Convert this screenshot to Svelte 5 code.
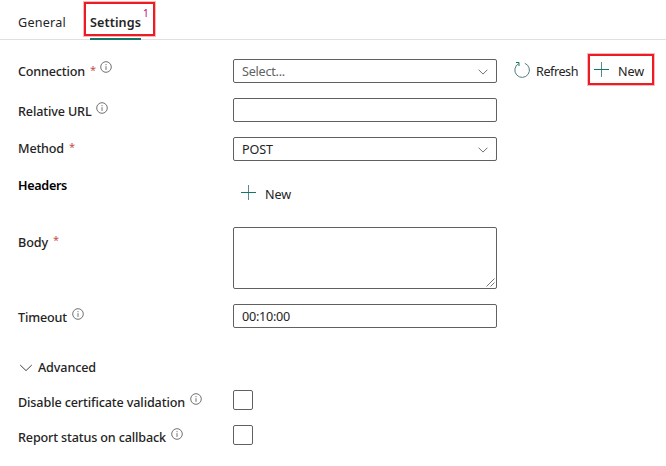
<script>
  const tabs = [
    { text: 'General', width: 48 },
    { text: 'Settings', width: 51, active: true, count: 1 }
  ];

  function fit(node, width) {
    const natural = node.getBoundingClientRect().width;
    node.style.letterSpacing = `${(width - natural) / node.textContent.length}px`;
  }
</script>

{#snippet info()}
  <svg class="info" width="12" height="12" viewBox="0 0 12 12">
    <circle cx="6" cy="6" r="5.3" />
    <path d="M6 5.2v3.7M6 3.1v1.1" />
  </svg>
{/snippet}

{#snippet label(text, width, required, hint)}
  <div class="label">
    <span use:fit={width}>{text}</span>
    {#if required}<b class="star">*</b>{/if}
    {#if hint}{@render info()}{/if}
  </div>
{/snippet}

{#snippet chevron()}
  <svg class="chevron" width="10" height="6" viewBox="0 0 10 6"><path d="M.6.7 5 5.1 9.4.7" /></svg>
{/snippet}

{#snippet plus()}
  <svg class="plus" width="15" height="15" viewBox="0 0 15 15">
    <path class="v" d="M7.5 0v15" /><path class="h" d="M0 7.5h15" />
  </svg>
{/snippet}

<main>
  <nav>
    {#each tabs as tab}
      <div class="tab" class:active={tab.active}>
        <span class="name" use:fit={tab.width}>{tab.text}</span>
        {#if tab.count}<span class="count">{tab.count}</span><i class="mark settings-mark"></i>{/if}
      </div>
    {/each}
  </nav>

  <section>
    <div class="row connection">
      {@render label('Connection', 67, true, true)}
      <div class="box muted"><span use:fit={43}>Select...</span>{@render chevron()}</div>
      <div class="action refresh">
        <svg width="16" height="16" viewBox="0 0 16 16">
          <path class="ring" d="M10.8 1.3A7.3 7.3 0 1 1 4.6 1.7" />
          <path class="arrow" d="M2 .5h3v3.5" />
        </svg>
        <span use:fit={42}>Refresh</span>
      </div>
      <div class="action new">
        {@render plus()}<span use:fit={26}>New</span>
        <i class="mark new-mark"></i>
      </div>
    </div>
    <div class="row relative">
      {@render label('Relative URL', 73.5, false, true)}
      <div class="box"></div>
    </div>
    <div class="row method">
      {@render label('Method', 46, true, false)}
      <div class="box"><span use:fit={31}>POST</span>{@render chevron()}</div>
    </div>
    <div class="row headers">
      {@render label('Headers', 49, false, false)}
      <div class="action add">{@render plus()}<span use:fit={26}>New</span></div>
    </div>
    <div class="row body">
      {@render label('Body', 30, true, false)}
      <div class="box area">
        <svg width="9" height="9" viewBox="0 0 9 9"><path d="M.5 8.5l8-8M4.5 8.5l4-4" /></svg>
      </div>
    </div>
    <div class="row timeout">
      {@render label('Timeout', 49, false, true)}
      <div class="box"><span use:fit={48}>00:10:00</span></div>
    </div>
    <div class="advanced">
      <svg width="14" height="8" viewBox="0 0 14 8"><path d="M1.2 1 7 6.6 12.8 1" /></svg>
      <span use:fit={58}>Advanced</span>
    </div>
    <div class="row check">
      {@render label('Disable certificate validation', 167, false, true)}
      <div class="checkbox"></div>
    </div>
    <div class="row check">
      {@render label('Report status on callback', 148, false, true)}
      <div class="checkbox"></div>
    </div>
  </section>
</main>

<style>
  :global(body) { background: #fff; }
  main {
    width: 666px;
    height: 466px;
    overflow: hidden;
    font: 12.6px/18px "Noto Sans", "Open Sans", sans-serif;
    color: #242424;
    white-space: nowrap;
  }
  svg { display: block; flex: none; fill: none; overflow: visible; }
  span { flex: none; }
  nav {
    box-sizing: border-box;
    height: 40px;
    display: flex;
    gap: 24px;
    padding-left: 18px;
    border-bottom: 1px solid #e0e0e0;
  }
  .tab { position: relative; height: 40px; padding-top: 14px; box-sizing: border-box; }
  .tab:first-child { width: 48px; }
  .tab.active { width: 51px; border-bottom: 2px solid #117865; }
  .name { display: inline-block; }
  .active .name { font-weight: 600; }
  .count { position: absolute; left: 53px; top: 4px; font-size: 10px; color: #bf0077; }
  .mark { position: absolute; box-sizing: border-box; border: 2px solid #ec1c24; box-shadow: 0 0 0 1px #f9b9bc; }
  .settings-mark { left: -6px; top: 2px; width: 71px; height: 34px; }
  section { padding: 19px 0 0 18px; }
  .row { display: flex; align-items: flex-start; height: 39px; }
  .label { display: flex; width: 215px; flex: none; padding-top: 3px; font-weight: 500; }
  .connection .label { padding-top: 4px; }
  .relative .label, .body .label { padding-top: 5px; }
  .headers { height: 51px; }
  .headers .label { padding-top: 1px; color: #000; font-weight: 600; }
  .body { height: 77px; }
  .body .label { padding-top: 7px; }
  .timeout .label { padding-top: 5px; }
  .check { height: 35px; }
  .check .label { padding-top: 4px; }
  .star { width: 5px; margin-left: 5px; font-weight: 400; font-size: 11px; color: #c4504b; margin-top: -2px; }
  .body .star { margin-top: -3px; }
  .info { margin: -1px 0 0 4.5px; stroke: #616161; stroke-width: .9; }
  .check .info { margin-left: 5px; }
  .connection .info { margin: -2px 0 0 5px; }
  .box {
    box-sizing: border-box;
    width: 264px;
    height: 24px;
    flex: none;
    border: 1px solid #616161;
    border-radius: 2px;
    padding: 3px 8px 0;
    display: flex;
    justify-content: space-between;
  }
  .muted { color: #616161; }
  .chevron { margin-top: 6px; stroke: #616161; stroke-width: .9; }
  .area { height: 62px; padding: 0 1px 1px; align-items: flex-end; justify-content: flex-end; }
  .area svg { stroke: #555; stroke-width: .8; }
  .action { position: relative; display: flex; align-items: flex-start; padding-top: 4px; }
  .refresh { margin-left: 17px; gap: 6px; }
  .refresh svg { margin-top: -1px; }
  .ring { stroke: #4f7d82; stroke-width: 1; }
  .arrow { stroke: #117865; stroke-width: 1; }
  .new { margin-left: 16px; gap: 9px; }
  .action .plus { margin-top: -1px; }
  .plus .v { stroke: #58899a; }
  .plus .h { stroke: #117865; }
  .new-mark { left: -6px; top: -5px; width: 66px; height: 31px; }
  .add { margin-left: 8px; padding-top: 10px; gap: 9px; }
  .advanced { display: flex; height: 47px; box-sizing: border-box; padding-top: 16px; gap: 5px; font-weight: 500; }
  .advanced svg { margin-top: 5px; margin-left: 1px; stroke: #424242; stroke-width: 1; }
  .checkbox { box-sizing: border-box; width: 20px; height: 20px; border: 1px solid #616161; border-radius: 2px; }
</style>
